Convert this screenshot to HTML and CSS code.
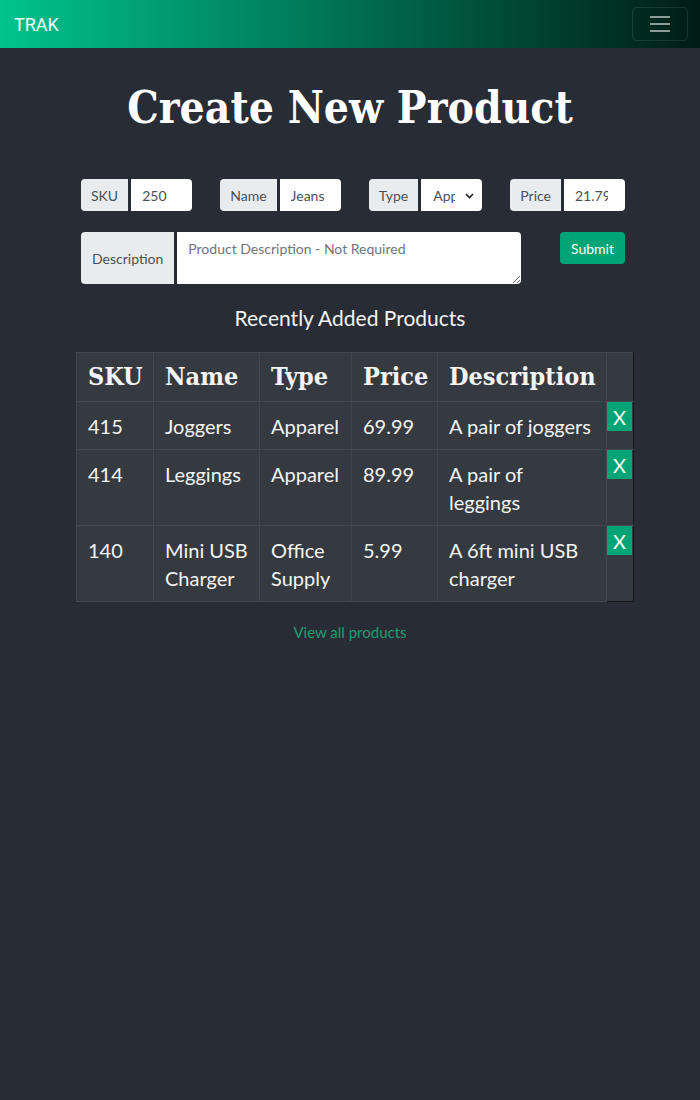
FILE: index.html
```html
<!DOCTYPE html>
<html lang="en">
<head>
<meta charset="utf-8">
<title>TRAK - Create New Product</title>
<link rel="stylesheet" href="styles.css">
</head>
<body>
<nav class="navbar">
  <a class="brand" href="#">TRAK</a>
  <button class="toggler" type="button" aria-label="Toggle navigation">
    <span class="bar"></span><span class="bar"></span><span class="bar"></span>
  </button>
</nav>

<h1 class="title">Create New Product</h1>

<div class="main">
  <form class="product-form">
    <div class="form-row">
      <div class="group">
        <span class="addon">SKU</span>
        <input class="field" type="text" value="250">
      </div>
      <div class="group">
        <span class="addon">Name</span>
        <input class="field" type="text" value="Jeans">
      </div>
      <div class="group">
        <span class="addon">Type</span>
        <div class="select-wrap">
          <select class="field select">
            <option>Apparel</option>
            <option>Office Supply</option>
          </select>
          <svg class="chevron" width="9" height="6" viewBox="0 0 9 6"><path d="M1 1 L4.5 4.5 L8 1" fill="none" stroke="#222" stroke-width="1.6"/></svg>
        </div>
      </div>
      <div class="group">
        <span class="addon">Price</span>
        <input class="field price" type="text" value="21.79">
      </div>
    </div>
    <div class="form-row">
      <div class="group">
        <span class="addon addon-tall">Description</span>
        <textarea class="field textarea" placeholder="Product Description - Not Required"></textarea>
      </div>
      <button class="btn-submit" type="button">Submit</button>
    </div>
  </form>
</div>

<h2 class="subtitle">Recently Added Products</h2>

<div class="main">
  <table class="products">
    <thead>
      <tr>
        <th class="c-sku">SKU</th>
        <th class="c-name">Name</th>
        <th class="c-type">Type</th>
        <th class="c-price">Price</th>
        <th class="c-desc">Description</th>
        <th class="c-del"></th>
      </tr>
    </thead>
    <tbody>
      <tr>
        <td>415</td><td>Joggers</td><td>Apparel</td><td>69.99</td><td>A pair of joggers</td>
        <td class="c-del"><button class="btn-del" type="button">X</button></td>
      </tr>
      <tr>
        <td>414</td><td>Leggings</td><td>Apparel</td><td>89.99</td><td>A pair of leggings</td>
        <td class="c-del"><button class="btn-del" type="button">X</button></td>
      </tr>
      <tr>
        <td>140</td><td>Mini USB Charger</td><td>Office Supply</td><td>5.99</td><td>A 6ft mini USB charger</td>
        <td class="c-del"><button class="btn-del" type="button">X</button></td>
      </tr>
    </tbody>
  </table>
</div>

<p class="view-all"><a href="#">View all products</a></p>
</body>
</html>
```

FILE: styles.css
```css
* { box-sizing: border-box; }

body {
  margin: 0;
  background: #282c34;
  color: #f2f2f2;
  font-family: Lato, "Noto Sans", sans-serif;
}

.navbar {
  height: 48px;
  display: flex;
  align-items: center;
  justify-content: space-between;
  padding: 0 12px 0 14px;
  background: linear-gradient(to right, #00c38d, #001c14);
}

.brand {
  font-family: Roboto, sans-serif;
  font-size: 18px;
  color: #f4fffa;
  text-decoration: none;
}

.toggler {
  width: 56px;
  height: 34px;
  border: 1px solid rgba(255, 255, 255, 0.1);
  border-radius: 4px;
  background: transparent;
  display: flex;
  flex-direction: column;
  justify-content: center;
  align-items: center;
  gap: 5px;
  padding: 0;
}

.bar {
  display: block;
  width: 20px;
  height: 2px;
  background: rgba(255, 255, 255, 0.55);
}

.title {
  font-family: "DejaVu Serif", serif;
  font-stretch: condensed;
  font-weight: bold;
  font-size: 44px;
  line-height: 56px;
  text-align: center;
  color: #fff;
  margin: 32px 0 43px;
}

.main {
  width: 557px;
  margin-left: 76px;
}

.product-form {
  padding: 0 8px 0 5px;
}

.form-row {
  display: flex;
  justify-content: space-between;
  align-items: flex-start;
  margin-bottom: 21px;
}

.group {
  display: flex;
  gap: 3px;
}

.addon {
  display: flex;
  align-items: center;
  height: 32px;
  padding: 0 10px;
  background: #e9ecef;
  color: #495057;
  font-size: 14px;
  border-radius: 4px 0 0 4px;
}

.addon-tall {
  height: 52px;
  padding: 0 11px;
}

.field {
  width: 61px;
  height: 32px;
  border: none;
  border-radius: 0 4px 4px 0;
  background: #fff;
  color: #495057;
  font-family: Lato, "Noto Sans", sans-serif;
  font-size: 14px;
  padding: 0 9px 0 11px;
  outline: none;
}

.price { padding-right: 17px; }

.select-wrap {
  position: relative;
}

.select {
  appearance: none;
  -webkit-appearance: none;
  padding: 0 27px 0 12px;
}

.chevron {
  position: absolute;
  right: 8px;
  top: 14px;
  pointer-events: none;
}

.textarea {
  width: 344px;
  height: 52px;
  padding: 8px 11px;
  resize: vertical;
  border-radius: 0 4px 4px 0;
}

.textarea::placeholder { color: #6c757d; }

.btn-submit {
  width: 65px;
  height: 32px;
  border: none;
  border-radius: 4px;
  background: #00a475;
  color: #fff;
  font-family: Lato, "Noto Sans", sans-serif;
  font-size: 14px;
  padding: 0;
}

.subtitle {
  font-size: 21px;
  font-weight: normal;
  text-align: center;
  color: #f4f4f4;
  margin: -1px 0 20px;
  line-height: 28px;
}

.products {
  width: 557px;
  border-collapse: collapse;
  background: #343a40;
  color: #f4f4f4;
  table-layout: fixed;
}

.products th,
.products td {
  border: 1px solid #41474e;
  text-align: left;
  vertical-align: top;
  padding: 10px 11px;
}

.products td {
  padding-bottom: 9px;
  font-size: 20px;
  line-height: 28px;
}

.products th {
  font-family: "DejaVu Serif", serif;
  font-stretch: condensed;
  font-weight: bold;
  font-size: 25px;
  line-height: 28px;
}

.c-sku { width: 77px; }
.c-name { width: 106px; }
.c-type { width: 92px; }
.c-price { width: 86px; }
.c-desc { width: 169px; }

.products .c-del {
  width: 27px;
  padding: 0;
  border-right: 1px solid #16181b;
}

.products tbody tr:last-child .c-del {
  border-bottom: 1px solid #16181b;
}

.btn-del {
  display: block;
  width: 25px;
  height: 29px;
  border: none;
  background: #00a475;
  color: #fff;
  font-family: Lato, "Noto Sans", sans-serif;
  font-size: 20px;
  padding: 0;
}

.view-all {
  text-align: center;
  margin: 21px 0 0;
  font-size: 15px;
}

.view-all a {
  color: #1a9f72;
  text-decoration: none;
}
```
